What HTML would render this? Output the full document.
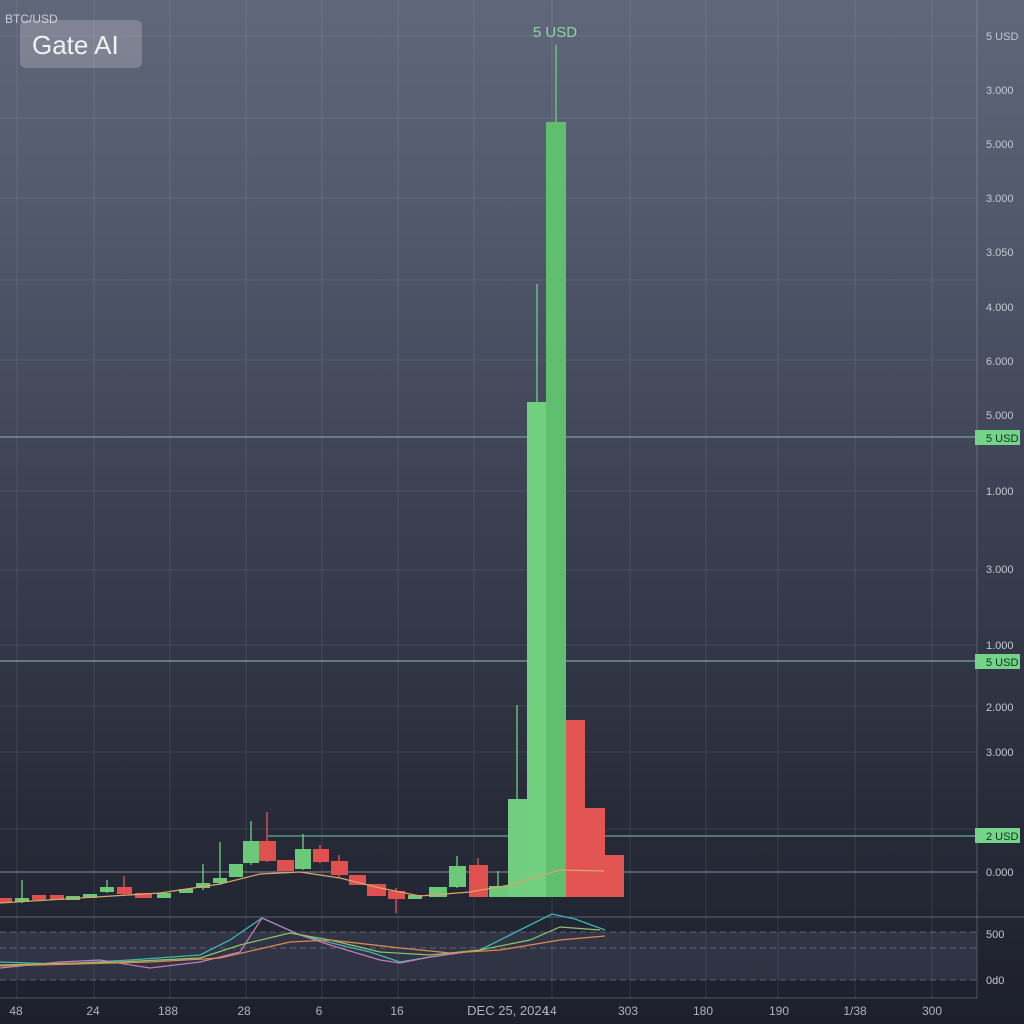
<!DOCTYPE html>
<html><head><meta charset="utf-8"><style>
html,body{margin:0;padding:0;width:1024px;height:1024px;overflow:hidden}
body{background:linear-gradient(#61677a 0%,#50566a 25%,#3b4051 50%,#272b39 80%,#1d202b 100%);font-family:"Liberation Sans",sans-serif}
svg{position:absolute;left:0;top:0}
</style></head><body>
<svg width="1024" height="1024" viewBox="0 0 1024 1024" font-family="Liberation Sans, sans-serif">
<g stroke="rgba(200,210,230,0.12)" stroke-width="1">
<line x1="17" y1="0" x2="17" y2="998"/><line x1="94" y1="0" x2="94" y2="998"/><line x1="170" y1="0" x2="170" y2="998"/><line x1="246" y1="0" x2="246" y2="998"/><line x1="322" y1="0" x2="322" y2="998"/><line x1="398" y1="0" x2="398" y2="998"/><line x1="474" y1="0" x2="474" y2="998"/><line x1="552" y1="0" x2="552" y2="998"/><line x1="630" y1="0" x2="630" y2="998"/><line x1="706" y1="0" x2="706" y2="998"/><line x1="778" y1="0" x2="778" y2="998"/><line x1="855" y1="0" x2="855" y2="998"/><line x1="932" y1="0" x2="932" y2="998"/>
<line x1="0" y1="36" x2="977" y2="36"/><line x1="0" y1="118" x2="977" y2="118"/><line x1="0" y1="198" x2="977" y2="198"/><line x1="0" y1="280" x2="977" y2="280"/><line x1="0" y1="360" x2="977" y2="360"/><line x1="0" y1="491" x2="977" y2="491"/><line x1="0" y1="570" x2="977" y2="570"/><line x1="0" y1="645" x2="977" y2="645"/><line x1="0" y1="706" x2="977" y2="706"/><line x1="0" y1="752" x2="977" y2="752"/><line x1="0" y1="829" x2="977" y2="829"/>
</g>
<line x1="977" y1="0" x2="977" y2="998" stroke="rgba(200,210,230,0.28)"/>
<rect x="0" y="932" width="977" height="48" fill="rgba(120,130,160,0.18)"/>
<g stroke="rgba(200,210,230,0.3)" stroke-dasharray="6 4"><line x1="0" y1="932" x2="977" y2="932"/><line x1="0" y1="948" x2="977" y2="948"/><line x1="0" y1="980" x2="977" y2="980"/></g>
<line x1="0" y1="917" x2="1024" y2="917" stroke="rgba(200,210,230,0.35)"/>
<line x1="0" y1="998" x2="977" y2="998" stroke="rgba(200,210,230,0.3)"/>
<line x1="0" y1="437" x2="977" y2="437" stroke="#9fd8c4" stroke-opacity="0.75"/>
<line x1="0" y1="661" x2="977" y2="661" stroke="#9fd8c4" stroke-opacity="0.85"/>
<line x1="268" y1="836" x2="977" y2="836" stroke="#7fdcb4" stroke-opacity="0.9"/>
<line x1="0" y1="872" x2="977" y2="872" stroke="#c8cdd8" stroke-opacity="0.6"/>
<g stroke-width="1.3">
<g stroke="#6dd07e"><line x1="22" y1="880" x2="22" y2="903"/><line x1="107" y1="880" x2="107" y2="893"/><line x1="203" y1="864" x2="203" y2="890"/><line x1="220" y1="842" x2="220" y2="885"/><line x1="251" y1="821" x2="251" y2="865"/><line x1="303" y1="834" x2="303" y2="870"/><line x1="457" y1="856" x2="457" y2="888"/><line x1="498" y1="871" x2="498" y2="897"/><line x1="517" y1="705" x2="517" y2="800"/><line x1="537" y1="284" x2="537" y2="403"/><line x1="556" y1="45" x2="556" y2="123"/></g>
<g stroke="#e25a5a"><line x1="124" y1="876" x2="124" y2="895"/><line x1="267" y1="812" x2="267" y2="862"/><line x1="396" y1="888" x2="396" y2="913"/><line x1="478" y1="858" x2="478" y2="897"/><line x1="320" y1="845" x2="320" y2="863"/><line x1="339" y1="855" x2="339" y2="877"/></g>
</g>
<g fill="#6cc97a">
<rect x="15" y="898" width="14" height="4"/><rect x="66" y="896" width="14" height="4"/><rect x="83" y="894" width="14" height="4"/><rect x="100" y="887" width="14" height="5"/><rect x="157" y="893" width="14" height="5"/><rect x="179" y="889" width="14" height="4"/><rect x="196" y="883" width="14" height="5"/><rect x="213" y="878" width="14" height="5"/><rect x="229" y="864" width="14" height="13"/><rect x="243" y="841" width="16" height="22"/><rect x="295" y="849" width="16" height="20"/><rect x="408" y="895" width="14" height="4"/><rect x="429" y="887" width="18" height="10"/><rect x="449" y="866" width="17" height="21"/><rect x="489" y="886" width="19" height="11"/>
<rect x="508" y="799" width="19" height="98" fill="#72cd80"/><rect x="527" y="402" width="19" height="495" fill="#72cf80"/><rect x="546" y="122" width="20" height="775" fill="#5fbf6e"/>
</g>
<g fill="#e0504f">
<rect x="0" y="898" width="12" height="5"/><rect x="32" y="895" width="14" height="5"/><rect x="50" y="895" width="14" height="5"/><rect x="117" y="887" width="15" height="7"/><rect x="135" y="893" width="17" height="5"/><rect x="259" y="841" width="17" height="20"/><rect x="277" y="860" width="17" height="11"/><rect x="313" y="849" width="16" height="13"/><rect x="331" y="861" width="17" height="14"/><rect x="349" y="875" width="17" height="10"/><rect x="367" y="884" width="19" height="12"/><rect x="388" y="891" width="17" height="8"/><rect x="469" y="865" width="19" height="32"/>
<rect x="566" y="720" width="19" height="177" fill="#e35552"/><rect x="585" y="808" width="20" height="89" fill="#e35552"/><rect x="605" y="855" width="19" height="42" fill="#e35552"/>
</g>
<path d="M0 903 L80 898 L160 893 L220 884 L260 874 L300 872 L340 878 L380 888 L420 896 L470 892 L510 885 L560 870 L604 871" fill="none" stroke="#d8a56a" stroke-width="1.3"/>
<path d="M0 962 L60 964 L130 960 L200 955 L230 940 L262 918 L300 935 L340 945 L370 952 L400 962 L430 957 L480 950 L530 925 L552 914 L575 919 L605 930" fill="none" stroke="#3fb6b2" stroke-width="1.3"/>
<path d="M0 968 L60 962 L100 960 L150 968 L200 962 L240 952 L262 918 L300 935 L330 945 L380 960 L400 963 L430 957 L480 950" fill="none" stroke="#c77ab8" stroke-width="1.2"/>
<path d="M0 965 L120 962 L200 958 L240 945 L290 933 L330 940 L380 952 L430 955 L480 950 L530 940 L560 927 L600 930" fill="none" stroke="#8cc46a" stroke-width="1.2"/>
<path d="M0 966 L150 962 L220 958 L290 942 L330 940 L400 948 L450 953 L500 950 L560 940 L605 936" fill="none" stroke="#d98a52" stroke-width="1.3"/>
<text x="5" y="23" font-size="12" fill="#c9cdd6">BTC/USD</text>
<rect x="20" y="20" width="122" height="48" rx="6" fill="rgba(255,255,255,0.2)"/>
<text x="32" y="54" font-size="26" fill="#f0f2f5">Gate AI</text>
<text x="555" y="37" font-size="15" fill="#8fd4a6" text-anchor="middle">5 USD</text>
<g font-size="11" fill="#c4c8d2">
<text x="986" y="40">5 USD</text><text x="986" y="94">3.000</text><text x="986" y="148">5.000</text><text x="986" y="202">3.000</text><text x="986" y="256">3.050</text><text x="986" y="311">4.000</text><text x="986" y="365">6.000</text><text x="986" y="419">5.000</text><text x="986" y="495">1.000</text><text x="986" y="573">3.000</text><text x="986" y="649">1.000</text><text x="986" y="711">2.000</text><text x="986" y="756">3.000</text><text x="986" y="876">0.000</text><text x="986" y="938">500</text><text x="986" y="984">0d0</text>
</g>
<g font-size="11" fill="#10301a">
<rect x="975" y="430" width="45" height="15" fill="#74d58a"/><text x="986" y="442">5 USD</text>
<rect x="975" y="654" width="45" height="15" fill="#74d58a"/><text x="986" y="666">5 USD</text>
<rect x="975" y="828" width="45" height="15" fill="#74d58a"/><text x="986" y="840">2 USD</text>
</g>
<g font-size="12" fill="#aeb3bf" text-anchor="middle">
<text x="16" y="1015">48</text><text x="93" y="1015">24</text><text x="168" y="1015">188</text><text x="244" y="1015">28</text><text x="319" y="1015">6</text><text x="397" y="1015">16</text><text x="508" y="1015" font-size="13">DEC 25, 2024</text><text x="550" y="1015">14</text><text x="628" y="1015">303</text><text x="703" y="1015">180</text><text x="779" y="1015">190</text><text x="855" y="1015">1/38</text><text x="932" y="1015">300</text>
</g>
</svg>
</body></html>
